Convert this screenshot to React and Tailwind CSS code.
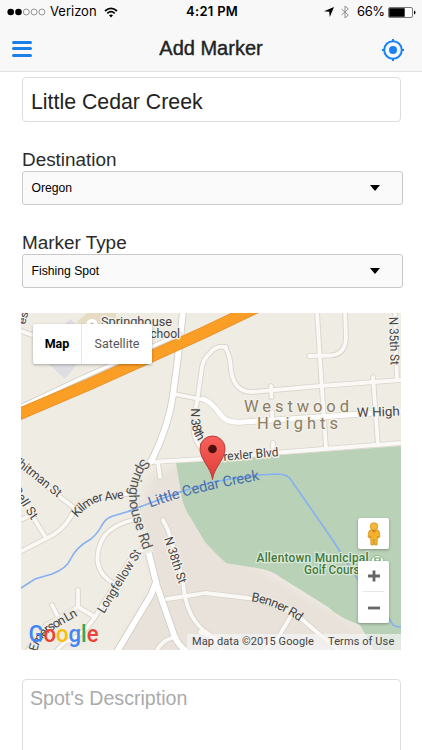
const MINOR_ROADS = [
  'M21 331 L40 338',
  'M226 347 Q216 345 210 353 Q204 358 202 367 L197 402 Q190 430 197 442 L208 460',
  'M225 347 Q231 357 231 370 Q234 392 252 392 L320 386 L401 380',
  'M317 312 L320 360 L326 448',
  'M345 312 L346 338 Q345 355 330 355.500 L309 356',
  'M271 386 L271.500 397',
  'M373 377 L378 445',
  'M395 312 L397 380',
  'M174 394 L205 400',
  'M152 462 L203 459 L285 452 L401 443',
  'M158 463 L160 477',
  'M21 467 L77 510',
  'M18 553 L47 538 Q61 532 70 518 Q77 499 106 496 L135 493',
  'M21 495 L33 517 L46 538',
  'M18 521 L31 515',
  'M133 520 Q108 526 101 542 Q90 569 113 583',
  'M145 550 Q136 550 126 566 L95 617 Q81 638 65 642 L57 650',
  'M95 617 L78 607 L78 590',
  'M52 605 L59 619',
  'M28 650 L46 625 L78 607',
  'M163 520 L168 530 L183 580 Q185 620 210 635 L222 650',
  'M167 599 L187 596 L205 593 L248 598 Q294 609 305 622 L338 650',
  'M292 614 L276 641 L265 650',
  'M172 638 Q163 640 157 650',
  'M200 632 L218 640',
  'M272 420 L272 412',
  'M273 449 L273 443',
];

const MAJOR_ROADS = [
  'M183 312 L177 365 L173 395 Q169 425 152 460 Q134 478 134 490 Q135 512 148 550 L157 586 L173 632 Q176 643 186 651',
  'M156 582 L151 595 L118 650',
];

const HEIGHTS_ROAD = 'M203 399 Q212 402 220 414 Q227 424 243 422 L320 417 L401 411';

const LABELS = [
  { text: 'Springhouse', x: 101, y: 325.5, size: 12.5, w: 71 },
  { text: 'School', x: 143, y: 338, size: 12.5, w: 37 },
  { text: 'W High', x: 357, y: 417, size: 13, w: 43, rotate: -2 },
  { text: 'N 35th St', x: 389, y: 317, size: 12.5, w: 48, rotate: 88 },
  { text: 'Trexler Blvd', x: 217, y: 461.5, size: 12.5, w: 62, rotate: -5 },
  { text: 'Whitman St', x: 9, y: 459, size: 12.5, w: 62, rotate: 38.5 },
  { text: 'Bell St', x: 12, y: 490, size: 12.5, w: 36, rotate: 57 },
  { text: 'Longfellow St', x: 104, y: 614, size: 12.5, w: 72, rotate: -58.5 },
  { text: 'N 38th St', x: 164, y: 538.5, size: 12.5, w: 48, rotate: 72 },
  { text: 'est', x: 25, y: 325, size: 11, w: 17, rotate: -75 },
];

// under: line through the middle of the letters, painted in the land colour so the road breaks there
const CURVED = [
  { id: 'kilmer', d: 'M77 518 Q92 500 107 500.5 L127 498', under: 'M76 511 Q90 497 106 496 L122 494', text: 'Kilmer Ave', size: 12.5, w: 53 },
  { id: 'emerson', d: 'M37 652 Q40 638 52 630.5 L84 612', under: 'M34 647 Q38 633 49 626 L74 611', text: 'Emerson Ln', size: 12.5, w: 57 },
  { id: 'benner', d: 'M251 601 Q278 605 304 625', under: 'M253 597 Q279 602 299 617', text: 'Benner Rd', size: 12.5, w: 53 },
  { id: 'upper38', d: 'M191 408 Q190 424 195 436 L210 462', under: 'M196 408 Q194 422 199 433 L210 452', text: 'N 38th St', size: 12.5, w: 48 },
];

const halo = '[paint-order:stroke] stroke-[#f3f0ea] stroke-[3px] [stroke-linejoin:round]';

function MapCanvas() {
  return (
    <svg viewBox="21 313 380 337" className="block h-[337px] w-[380px] font-['Roboto',sans-serif]">
      <defs>
        <linearGradient id="pinFill" x1="0" y1="0" x2="0" y2="1">
          <stop offset="0" stopColor="#f9605b" />
          <stop offset="1" stopColor="#dd3f37" />
        </linearGradient>
        <filter id="soften" x="-20%" y="-20%" width="140%" height="140%">
          <feGaussianBlur stdDeviation="4" />
        </filter>
        {CURVED.map((c) => (
          <path key={c.id} id={c.id} d={c.d} />
        ))}
        <path id="springhouse" d="M143 458 Q127 479 129.500 502 Q131 517 147 560" />
        <path id="creek" d="M150.500 507.500 Q195 491 263 479.500" />
      </defs>

      {/* land, school grounds, golf course */}
      <rect x="21" y="313" width="380" height="337" fill="#efece4" />
      <path d="M150 475 L180 462 L212 540 L400 650 L118 650 L155 585 L137 515 Z" fill="#e8e2da" filter="url(#soften)" />
      <path d="M155 587 L118 650 L184 650 Z" fill="#e8e2da" />
      <path d="M77 322 L88 312 L116 312 L116 320 L95 333 Z" fill="#e5dcc3" />
      <path d="M65 324 L70 319 L76 324 Z M48 363 L65 379 L78 363 Z" fill="#dedee2" />
      <path
        d="M176 463 L182 498 Q184 509 192 520 L205 542 Q214 552 226 563 L250 567 Q271 569 280 577 L328 607 Q338 617 360 625 L374 650 L401 650 L401 446 Z"
        fill="#b8d1b7"
      />

      <path
        d="M21 588 L35 579 L52 574 Q67 568 70 560 Q76 547 91 539 Q98 533 102 525 Q106 518 113 516 L130 511 L145 505 L180 492 L212 482 L258 475 L277 474 Q288 474 291 480 L332 539 L357 578 L385 612 L393 625 Q396 627 401 627"
        fill="none"
        stroke="#86b0f2"
        strokeWidth="1.6"
      />

      {/* roads: casing first, then fill */}
      <g fill="none" strokeLinecap="round" strokeLinejoin="round">
        {MINOR_ROADS.map((d) => (
          <path key={d} d={d} stroke="#d9d5cc" strokeWidth="5.6" />
        ))}
        {MAJOR_ROADS.map((d) => (
          <path key={d} d={d} stroke="#d3cec6" strokeWidth="7.6" />
        ))}
        <path d={HEIGHTS_ROAD} stroke="#d9d5cc" strokeWidth="6.5" />
        {MINOR_ROADS.map((d) => (
          <path key={d} d={d} stroke="#faf9f6" strokeWidth="3.8" />
        ))}
        {MAJOR_ROADS.map((d) => (
          <path key={d} d={d} stroke="#ffffff" strokeWidth="5.8" />
        ))}
        <path d={HEIGHTS_ROAD} stroke="#ffffff" strokeWidth="5" />
        <path d="M18 408 L75 381 L180 334" stroke="#d3cec6" strokeWidth="5" />
        <path d="M18 408 L75 381 L180 334" stroke="#ffffff" strokeWidth="3.4" />
        <path d="M16 415.500 L90 384 L150 357 L205 332 L255 308" stroke="#e8912a" strokeWidth="12" />
        <path d="M16 415.500 L90 384 L150 357 L205 332 L255 308" stroke="#fa9e25" strokeWidth="10.400" />
      </g>
      <g fill="none" stroke="#eeebe3">
        {CURVED.map((c) => (
          <path key={c.id} d={c.under} strokeWidth="8" />
        ))}
        <path d="M149 462 Q131 481 134 502 Q136 518 149 553" strokeWidth="10" />
      </g>
      <path d="M128 511.500 L142 506" stroke="#86b0f2" strokeWidth="1.600" />

      <circle cx="92" cy="325" r="6" fill="#ffffff" />
      <circle cx="92" cy="324" r="1.500" fill="#c9bfa6" />
      <circle cx="377.500" cy="562" r="6.500" fill="#ffffff" stroke="#8db58a" />
      <path d="M375 566 V558 H380 V561 H375" fill="none" stroke="#5b9c52" strokeWidth="1.200" />

      {/* labels */}
      <g fill="#444444" className={halo}>
        {LABELS.map((l) => (
          <text
            key={`${l.text}-${l.x}`}
            fontSize={l.size}
            textLength={l.w}
            lengthAdjust="spacingAndGlyphs"
            transform={`translate(${l.x} ${l.y}) rotate(${l.rotate || 0})`}
          >
            {l.text}
          </text>
        ))}
      </g>
      <g fill="#444444">
        {CURVED.map((c) => (
          <text key={c.id} fontSize={c.size} textLength={c.w}>
            <textPath href={`#${c.id}`} textLength={c.w}>
              {c.text}
            </textPath>
          </text>
        ))}
      </g>
      <text fontSize="14.200" fill="#555555" textLength="98">
        <textPath href="#springhouse" textLength="98">
          Springhouse Rd
        </textPath>
      </text>
      <g fill="#8a7e64" fontSize="16.500" className={halo}>
        <text x="244" y="411.500" textLength="105">Westwood</text>
        <text x="257" y="428.500" textLength="81">Heights</text>
      </g>
      <text fontSize="14.600" fill="#4a6fa8" textLength="113">
        <textPath href="#creek" textLength="113">
          Little Cedar Creek
        </textPath>
      </text>
      <g fill="#41793a" fontSize="12" fontWeight="500" className="[paint-order:stroke] stroke-[#dbe8d9] stroke-[2.5px]">
        <text x="256.500" y="561.500" textLength="112">Allentown Municipal</text>
        <text x="304" y="573.500" textLength="62">Golf Course</text>
      </g>

      {/* pin */}
      <path
        d="M212.500 479.500 C211 467 200 460 200 448.500 A12.500 12.500 0 0 1 225 448.500 C225 460 214 467 212.500 479.500 Z"
        fill="url(#pinFill)"
        stroke="#b3322c"
        strokeWidth="0.900"
      />
      <circle cx="212.500" cy="449" r="4.300" fill="#4b0f0d" />

      <text x="28.500" y="641.500" fontSize="23.500" textLength="70" fontWeight="500" lengthAdjust="spacingAndGlyphs">
        <tspan fill="#4285f4">G</tspan>
        <tspan fill="#ea4335">o</tspan>
        <tspan fill="#fbbc05">o</tspan>
        <tspan fill="#4285f4">g</tspan>
        <tspan fill="#34a853">l</tspan>
        <tspan fill="#ea4335">e</tspan>
      </text>
    </svg>
  );
}

function Pegman() {
  return (
    <svg viewBox="0 0 16 24" className="h-6 w-4">
      <path
        d="M5 8 H11 Q13 8 13.300 10 L14 15 L12 16 L11.500 14 L11 23 H8.600 L8 17 L7.400 23 H5 L4.500 14 L4 16 L2 15 L2.700 10 Q3 8 5 8 Z"
        fill="#f4b22a"
        stroke="#c98a1b"
        strokeWidth="0.700"
      />
      <circle cx="8" cy="4.500" r="3.800" fill="#f7b935" stroke="#c98a1b" strokeWidth="0.700" />
      <path d="M5.500 8.500 L8 11 L10.500 8.500 Z" fill="#e5762a" />
    </svg>
  );
}

function MapPanel() {
  return (
    <div className="relative mt-[25px] ml-[21px] h-[337px] w-[380px] overflow-hidden font-['Roboto',sans-serif]">
      <MapCanvas />
      <div className="absolute top-[11px] left-3 flex h-10 w-[119px] rounded-[2px] bg-white text-[12.5px] shadow-[0_1px_3px_rgba(0,0,0,0.3)]">
        <button className="w-[49px] border-r border-gray-200 font-bold text-black">Map</button>
        <button className="flex-1 text-[#565656]">Satellite</button>
      </div>
      <button
        aria-label="Street View"
        className="absolute top-[205px] left-[337px] flex h-[31px] w-[31px] items-center justify-center rounded-[2px] bg-white shadow-[0_1px_3px_rgba(0,0,0,0.3)]"
      >
        <Pegman />
      </button>
      <div className="absolute top-[248px] left-[337px] flex h-[62px] w-[31px] flex-col items-center rounded-[2px] bg-white shadow-[0_1px_3px_rgba(0,0,0,0.3)]">
        <button aria-label="Zoom in" className="flex h-[30px] items-center">
          <svg viewBox="0 0 12 12" className="h-3 w-3">
            <path d="M6 0.500 V11.500 M0 6 H12" stroke="#666666" strokeWidth="2.800" />
          </svg>
        </button>
        <div className="h-px w-[21px] bg-gray-200" />
        <button aria-label="Zoom out" className="flex h-[31px] items-center">
          <svg viewBox="0 0 12 12" className="h-3 w-3">
            <path d="M0 6 H12" stroke="#666666" strokeWidth="2.800" />
          </svg>
        </button>
      </div>
      <div className="absolute right-0 bottom-0 flex h-4 w-[214px] items-center bg-[#f5f5f5]/70 text-[11px] whitespace-nowrap text-[#444444]">
        <span className="ml-[5px] w-[136px] tracking-[0.1px]">Map data ©2015 Google</span>
        <span className="tracking-[0.1px]">Terms of Use</span>
      </div>
    </div>
  );
}

function StatusBar() {
  return (
    <div className="flex h-6 items-center pl-[7px] font-['Inter',sans-serif] text-[13px] text-black">
      <svg viewBox="0 0 39 8" className="h-2 w-[39px]">
        {[3.7, 11.5, 19.3, 27.1, 34.9].map((cx, i) => (
          <circle key={cx} cx={cx} cy="4" r={i < 2 ? 3.3 : 3} fill={i < 2 ? '#000' : 'none'} stroke={i < 2 ? 'none' : '#555'} strokeWidth="0.6" />
        ))}
      </svg>
      <span className="ml-1 w-[50px]">Verizon</span>
      <svg viewBox="0 0 14 11" className="ml-1 h-[11px] w-3.5" fill="none" stroke="#000">
        <path d="M1 4 Q7 -1.400 13 4" strokeWidth="1.700" />
        <path d="M3.300 6.400 Q7 3 10.700 6.400" strokeWidth="1.700" />
        <path d="M5 8.300 Q7 6.500 9 8.300 L7 10.500 Z" fill="#000" stroke="none" />
      </svg>
      <span className="ml-[68px] w-[138px] font-semibold tracking-[0.3px]">4:21 PM</span>
      <svg viewBox="0 0 10 10" className="h-2.5 w-2.5">
        <path d="M10 0 L5.800 10 L5.200 4.800 L0 4.300 Z" fill="#000" />
      </svg>
      <svg viewBox="0 0 8 14" className="ml-[7px] h-3.5 w-2" fill="none" stroke="#8e8e93" strokeWidth="1">
        <path d="M0.500 4 L7.300 10 L4 13 V1 L7.300 4 L0.500 10" />
      </svg>
      <span className="ml-2 w-[31px] tracking-[-0.4px]">66%</span>
      <svg viewBox="0 0 28 11" className="h-[11px] w-7">
        <rect x="0.500" y="0.500" width="24" height="10" rx="1.500" fill="#fff" stroke="#555" strokeWidth="0.800" />
        <rect x="1.200" y="1.200" width="15.500" height="8.600" fill="#000" />
        <path d="M26 3.500 Q27.500 4 27.500 5.500 Q27.500 7 26 7.500 Z" fill="#000" />
      </svg>
    </div>
  );
}

function Header() {
  return (
    <header className="h-[72px] border-b border-[#e2e2e2] bg-[#f8f8f8]">
      <StatusBar />
      <div className="flex h-[47px] items-center justify-between pr-[17px] pl-[12px]">
        <button aria-label="Menu" className="flex w-7 flex-col gap-[3.5px] pt-0.5">
          <span className="h-[3px] w-5 rounded-full bg-[#1a80e8]" />
          <span className="h-[3px] w-5 rounded-full bg-[#1a80e8]" />
          <span className="h-[3px] w-5 rounded-full bg-[#1a80e8]" />
        </button>
        <h1 className="pl-px text-[20px] text-[#222222] [-webkit-text-stroke:0.4px_#222222]">Add Marker</h1>
        <button aria-label="Locate me">
          <svg viewBox="0 0 24 24" className="mt-1 h-6 w-6" fill="none" stroke="#1a82f7" strokeWidth="2">
            <circle cx="12" cy="12" r="8.800" />
            <circle cx="12" cy="12" r="4" fill="#1a82f7" stroke="none" />
            <path d="M12 1 V4 M12 20 V23 M1 12 H4 M20 12 H23" />
          </svg>
        </button>
      </div>
    </header>
  );
}

function SelectField({ label, value }) {
  return (
    <div className="ml-[22px] w-[381px]">
      <p className="h-[23px] text-[18.9px] leading-6 whitespace-nowrap text-[#2b2b2b]">{label}</p>
      <div className="flex h-[34px] items-center justify-between rounded-[3px] border border-[#c8c8c8] bg-[#fafafa] pr-[22px] pl-[8.5px] text-[12.2px] text-black">
        <span>{value}</span>
        <svg viewBox="0 0 10 6" className="h-1.5 w-2.5">
          <path d="M0 0 H10 L5 6 Z" fill="#000" />
        </svg>
      </div>
    </div>
  );
}

export default function App() {
  return (
    <div className="h-[750px] w-[422px] overflow-hidden bg-white font-['Liberation_Sans',Arial,sans-serif]">
      <Header />
      <div className="mt-[5px] ml-[22px] flex h-[45px] w-[379px] items-center rounded-[4px] border border-[#dddddd] pt-[6px] pl-[8px] text-[21.3px] text-[#222222]">
        Little Cedar Creek
      </div>
      <div className="flex flex-col gap-[26px] pt-[26px]">
        <SelectField label="Destination" value="Oregon" />
        <SelectField label="Marker Type" value="Fishing Spot" />
      </div>
      <MapPanel />
      <div className="mt-[29px] ml-[22px] h-[90px] w-[379px] rounded-[4px] border border-[#dddddd] pt-[6px] pl-[7px] text-[19.6px] leading-6 text-[#aaaaaa]">
        Spot's Description
      </div>
    </div>
  );
}
